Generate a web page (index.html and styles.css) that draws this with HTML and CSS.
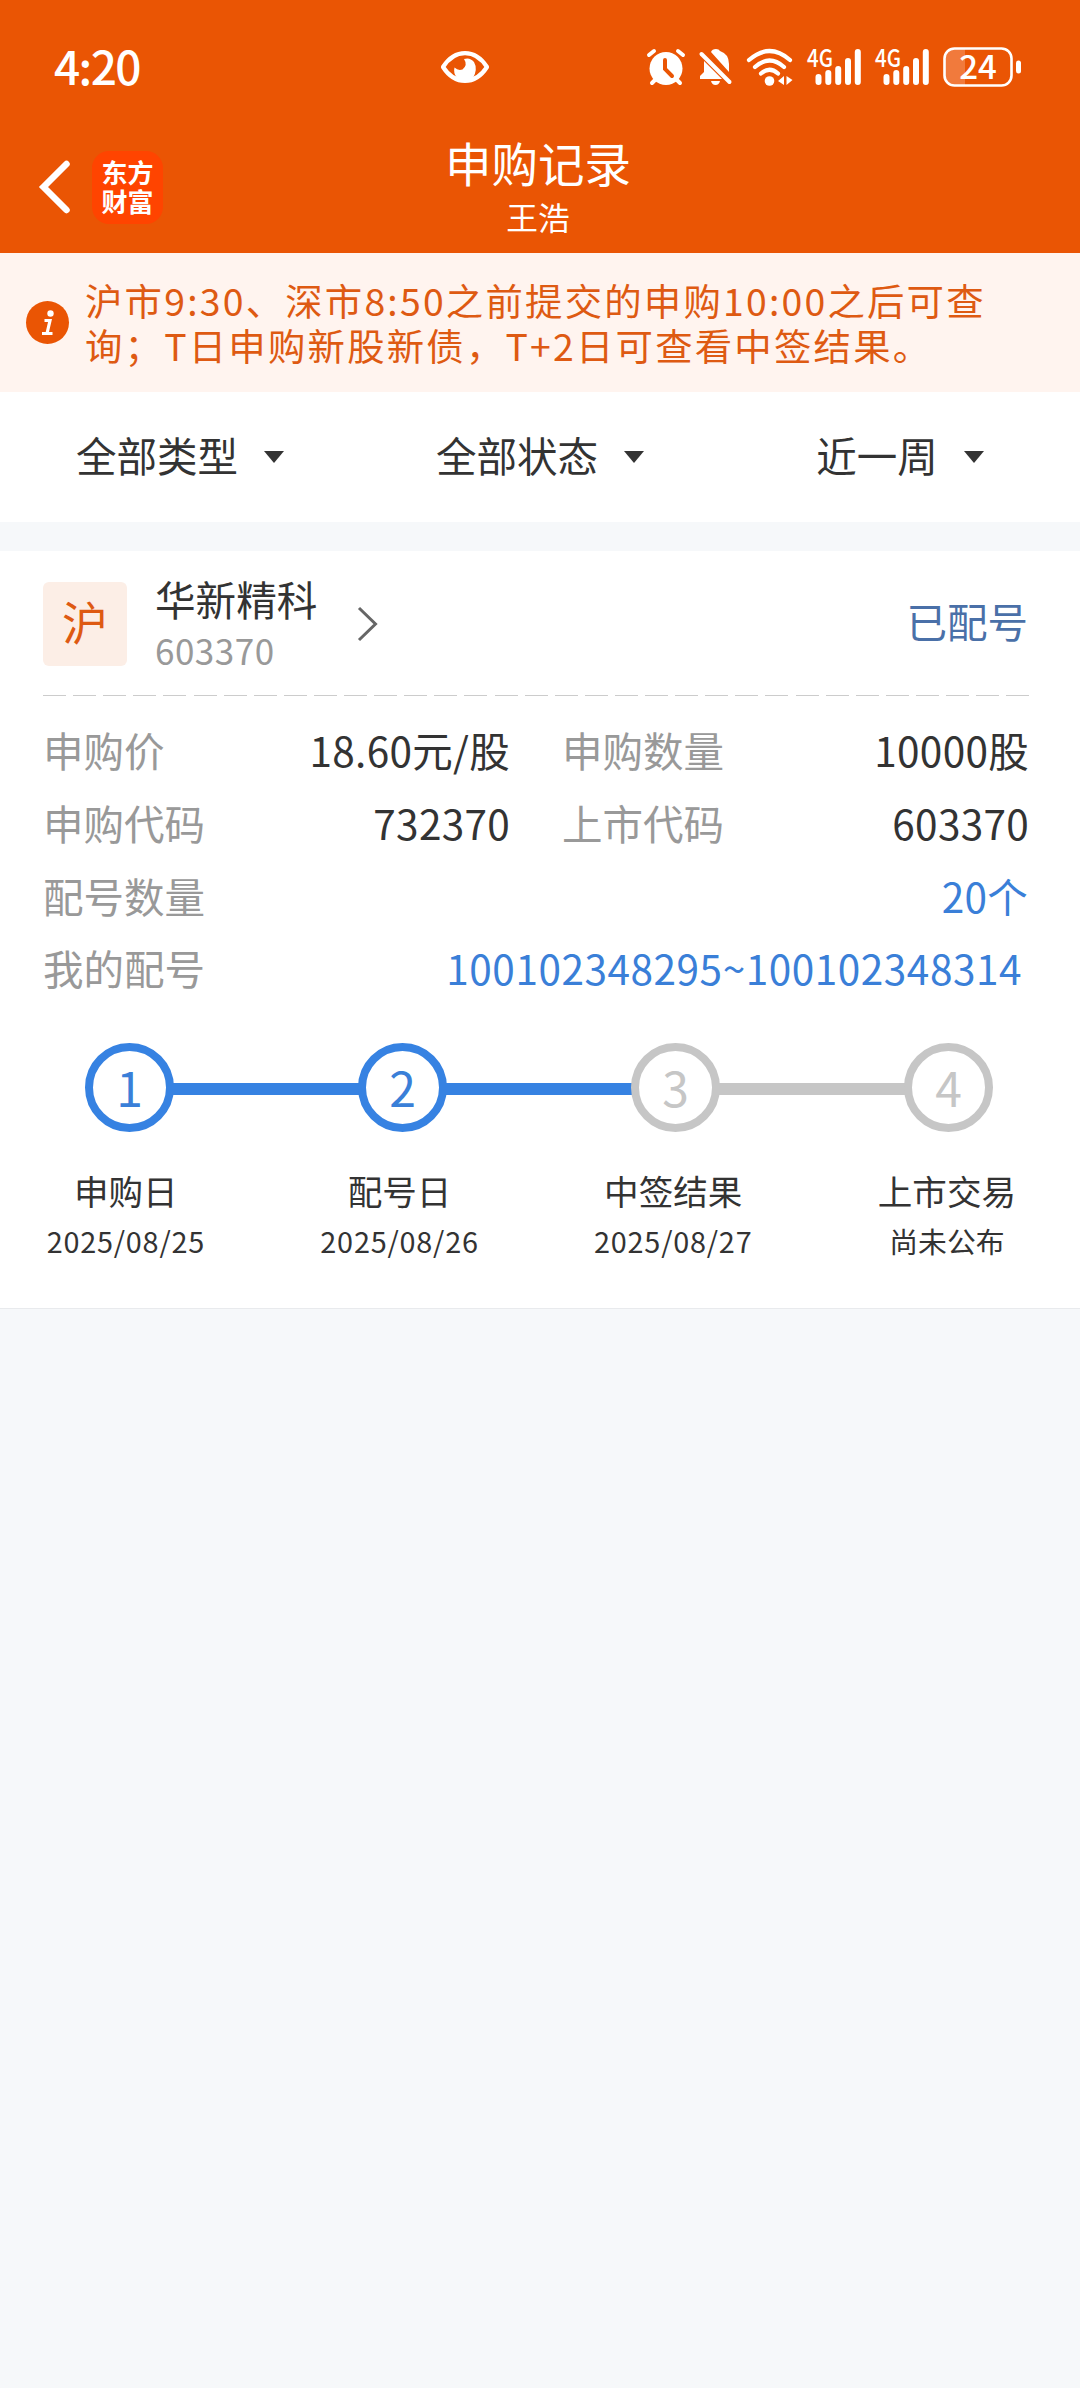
FILE: index.html
```html
<!DOCTYPE html>
<html lang="zh-CN">

<head>
	<meta charset="UTF-8">
	<meta name="viewport" content="width=device-width, initial-scale=1.0">
	<title>申购记录</title>
	<link rel="stylesheet" href="styles.css">
</head>

<body>

	<header class="header">
		<div class="status-bar">
			<span class="time">4:20</span>
			<svg class="eye" width="50" height="34" viewBox="0 0 50 34">
				<path d="M3 17C15 -1.500 35 -1.500 47 17C35 35.500 15 35.500 3 17Z" fill="none" stroke="#fff" stroke-width="4.200" stroke-linejoin="round" />
				<path d="M24 9Q30 7 34 12Q38 19 33 28Q25 33 17 28Q13 23 14.500 17.500Q18 21 22.500 19.500Q28 15 24 9Z" fill="#fff" />
			</svg>
			<div class="status-icons">
				<!-- alarm -->
				<svg width="38" height="40" viewBox="0 0 38 40">
					<g stroke="#fff" stroke-width="4" stroke-linecap="round">
						<path d="M2 8L7 4M36 8L31 4M9 32L5 36M29 32L33 36" />
					</g>
					<circle cx="19" cy="21.500" r="16.500" fill="#fff" />
					<path d="M18 13V22L25 29" fill="none" stroke="#ea5504" stroke-width="4" stroke-linecap="round" />
				</svg>
				<!-- muted bell -->
				<svg width="33" height="40" viewBox="0 0 33 40">
					<path d="M12 5Q13 2 17 2Q20 2 21 4Q30 7 30 17V25Z" fill="#fff" />
					<path d="M5 14L23 32H1V29L5 25Z" fill="#fff" />
					<path d="M12 34H21Q20 38 16.500 38Q13 38 12 34Z" fill="#fff" />
					<path d="M2.500 7L30.500 35" stroke="#fff" stroke-width="4" stroke-linecap="round" />
				</svg>
				<!-- wifi -->
				<svg width="47" height="40" viewBox="0 0 47 40">
					<g fill="none" stroke="#fff" stroke-width="4.200" stroke-linecap="round">
						<path d="M3 13Q23.500 -5 44 13M9 20Q23.500 7 38 20M15 26.500Q23.500 19 32 26.500" />
					</g>
					<circle cx="23.500" cy="34" r="4.800" fill="#fff" />
					<path d="M38 29V38L32 34ZM40.500 29V38L46.500 33Z" fill="#fff" />
				</svg>
				<!-- sim 1 -->
				<svg width="54" height="40" viewBox="0 0 54 40">
					<text class="net" x="0" y="20" textLength="26" lengthAdjust="spacingAndGlyphs">4G</text>
					<path d="M11.500 30V35M21.300 26V35M31.200 22V35M41 14V35M50.800 5V35" stroke="#fff" stroke-width="6" stroke-linecap="round" />
				</svg>
				<!-- sim 2 -->
				<svg width="54" height="40" viewBox="0 0 54 40">
					<text class="net" x="0" y="20" textLength="26" lengthAdjust="spacingAndGlyphs">4G</text>
					<path d="M11.500 30V35M21.300 26V35M31.200 22V35M41 14V35M50.800 5V35" stroke="#fff" stroke-width="6" stroke-linecap="round" />
				</svg>
				<!-- battery -->
				<svg width="78" height="40" viewBox="0 0 78 40">
					<path d="M22 2V38H11Q2 38 2 28V12Q2 2 11 2Z" fill="#f17a3c" />
					<rect x="1.500" y="1.500" width="67" height="37" rx="10" fill="none" stroke="#fff" stroke-width="2.600" />
					<rect x="73" y="13.500" width="5" height="13" rx="2.500" fill="#fff" />
					<text class="level" x="35" y="32" text-anchor="middle">24</text>
				</svg>
			</div>
		</div>

		<nav class="nav">
			<div class="nav-left">
				<svg class="back" width="32" height="54" viewBox="0 0 32 54">
					<path d="M27.500 4L4.500 27L27.500 50" fill="none" stroke="#fff" stroke-width="6.500" stroke-linecap="round" stroke-linejoin="miter" />
				</svg>
				<div class="logo">东方<br>财富</div>
			</div>
			<div class="nav-title">
				<h1>申购记录</h1>
				<p>王浩</p>
			</div>
		</nav>
	</header>

	<div class="notice">
		<svg class="info" width="43" height="43" viewBox="0 0 43 43">
			<circle cx="21.500" cy="21.500" r="21.500" fill="#ea5504" />
			<circle cx="24.500" cy="12.500" r="3.200" fill="#fff" />
			<path d="M18.500 19.500H24L21 32.500M16 32.500H26.500" fill="none" stroke="#fff" stroke-width="3.200" />
		</svg>
		<p>沪市9:30、深市8:50之前提交的申购10:00之后可查<br>询；T日申购新股新债，T+2日可查看中签结果。</p>
	</div>

	<div class="filters">
		<div class="filter"><span>全部类型</span><i class="arrow"></i></div>
		<div class="filter"><span>全部状态</span><i class="arrow"></i></div>
		<div class="filter"><span>近一周</span><i class="arrow"></i></div>
	</div>

	<section class="card">
		<div class="stock">
			<span class="market">沪</span>
			<div class="stock-name">
				<h2>华新精科</h2>
				<p>603370</p>
			</div>
			<svg class="more" width="22" height="36" viewBox="0 0 22 36">
				<path d="M2 2L18.500 18L2 34" fill="none" stroke="#666" stroke-width="3" />
			</svg>
			<span class="state">已配号</span>
		</div>

		<div class="divider"></div>

		<div class="info-grid">
			<div class="item"><label>申购价</label><span>18.60元/股</span></div>
			<div class="item"><label>申购数量</label><span>10000股</span></div>
			<div class="item"><label>申购代码</label><span>732370</span></div>
			<div class="item"><label>上市代码</label><span>603370</span></div>
			<div class="item wide"><label>配号数量</label><span class="blue">20个</span></div>
			<div class="item wide"><label>我的配号</label><span class="blue numbers">100102348295~100102348314</span></div>
		</div>

		<div class="track">
			<span class="dot done">1</span>
			<span class="line done"></span>
			<span class="dot done">2</span>
			<span class="line done"></span>
			<span class="dot">3</span>
			<span class="line"></span>
			<span class="dot">4</span>
		</div>
		<div class="steps">
			<div class="step"><h3>申购日</h3><p class="date">2025/08/25</p></div>
			<div class="step"><h3>配号日</h3><p class="date">2025/08/26</p></div>
			<div class="step"><h3>中签结果</h3><p class="date">2025/08/27</p></div>
			<div class="step"><h3>上市交易</h3><p>尚未公布</p></div>
		</div>
	</section>

</body>

</html>
```

FILE: styles.css
```css
/* Basic reset and styling */
* {
	margin: 0;
	padding: 0;
	box-sizing: border-box;
}

body {
	min-height: 100vh;
	background-color: #f6f8fa;
	font-family: "Noto Sans CJK SC", sans-serif;
	font-size: 40.5px;
	color: #333;
}

svg {
	display: block;
	flex-shrink: 0;
	overflow: visible;
}

h1, h2, h3 {
	font-weight: 400;
}

/* Header */
.header {
	height: 253px;
	background-color: #ea5504;
	color: #fff;
}

.status-bar {
	display: flex;
	align-items: center;
	height: 134px;
	padding: 0 59px 0 54px;
}

.time {
	width: 386px;
	padding-bottom: 4px;
	font-size: 46px;
	font-weight: 500;
	line-height: 60px;
	letter-spacing: -1.6px;
}

.status-icons {
	display: flex;
	gap: 14px;
	margin-left: auto;
}

.net {
	font-size: 24px;
	font-weight: 500;
	fill: #fff;
}

.level {
	font-size: 33px;
	font-weight: 500;
	fill: #fff;
}

.nav {
	display: grid;
	grid-template-columns: 1fr auto 1fr;
	align-items: start;
	height: 106px;
	padding: 0 39px;
}

.nav-left {
	display: flex;
	align-items: center;
	gap: 21px;
	height: 106px;
}

.logo {
	width: 71px;
	height: 73px;
	padding-top: 6px;
	border-radius: 17px;
	background-color: #ff4400;
	font-size: 26px;
	font-weight: 700;
	line-height: 29.5px;
	text-align: center;
}

.nav-title {
	padding-right: 4px;
	text-align: center;
}

.nav-title h1 {
	font-size: 46.5px;
	line-height: 55px;
}

.nav-title p {
	font-size: 31.7px;
	line-height: 55px;
}

/* Notice */
.notice {
	display: flex;
	align-items: center;
	gap: 16px;
	height: 139px;
	padding: 0 26px;
	background-color: #fff4ef;
	color: #de5a12;
	font-size: 37.4px;
	line-height: 44.5px;
	letter-spacing: 2.2px;
	white-space: nowrap;
}

/* Filters */
.filters {
	display: grid;
	grid-template-columns: repeat(3, 1fr);
	height: 130px;
	margin-bottom: 29px;
	background-color: #fff;
}

.filter {
	display: flex;
	justify-content: center;
	align-items: center;
	gap: 26px;
}

.filter span {
	padding-bottom: 5px;
}

.arrow {
	border: 10px solid transparent;
	border-top: 12px solid #333;
	border-bottom: 0;
}

/* Card */
.card {
	height: 758px;
	padding: 31px 51px 0 43px;
	border-bottom: 1px solid #e8eaed;
	background-color: #fff;
}

.stock {
	display: flex;
	align-items: center;
	height: 84px;
}

.market {
	width: 84px;
	height: 84px;
	margin-right: 28px;
	border-radius: 6px;
	background-color: #fceee6;
	color: #de5a12;
	font-size: 46px;
	line-height: 76px;
	text-align: center;
}

.stock-name h2 {
	font-size: 40.6px;
	line-height: 52px;
}

.stock-name p {
	color: #999;
	font-size: 35px;
	line-height: 50px;
	letter-spacing: 0.5px;
}

.more {
	margin-left: 40px;
}

.state {
	margin-left: auto;
	padding: 0 1px 7px 0;
	color: #4a70a8;
}

.divider {
	height: 1px;
	margin: 29px 0 18px;
	background: repeating-linear-gradient(to right, #ccc 0 23px, transparent 23px 30.1px);
}

.info-grid {
	display: grid;
	grid-template-columns: 467px 467px;
	column-gap: 52px;
	line-height: 72.8px;
}

.item {
	display: flex;
	justify-content: space-between;
	white-space: nowrap;
}

.item label {
	color: #999;
}

.item span {
	letter-spacing: 0.3px;
}

.wide {
	grid-column: 1 / 3;
	padding-right: 1px;
}

.item .blue {
	color: #3a7fd8;
}

.item .numbers {
	padding-right: 6px;
	letter-spacing: 0.55px;
}

/* Progress */
.track {
	display: flex;
	align-items: center;
	margin: 38px 36px 0 42px;
}

.dot {
	width: 89px;
	height: 89px;
	border: 8.5px solid #c6c6c6;
	border-radius: 50%;
	color: #c6c6c6;
	font-size: 48px;
	line-height: 70px;
	text-align: center;
}

.line {
	flex: 1;
	height: 12px;
	margin: 3px -2px 0;
	background-color: #c6c6c6;
}

.dot.done {
	border-color: #3682e2;
	color: #3a7fd8;
}

.line.done {
	background-color: #3682e2;
}

.steps {
	display: grid;
	grid-template-columns: repeat(4, 273.7px);
	margin: 31px 0 0 -54px;
	text-align: center;
}

.step h3 {
	font-size: 34.6px;
	line-height: 54px;
}

.step p {
	font-size: 28.8px;
	line-height: 48px;
}

.step .date {
	letter-spacing: 0.8px;
}
```
